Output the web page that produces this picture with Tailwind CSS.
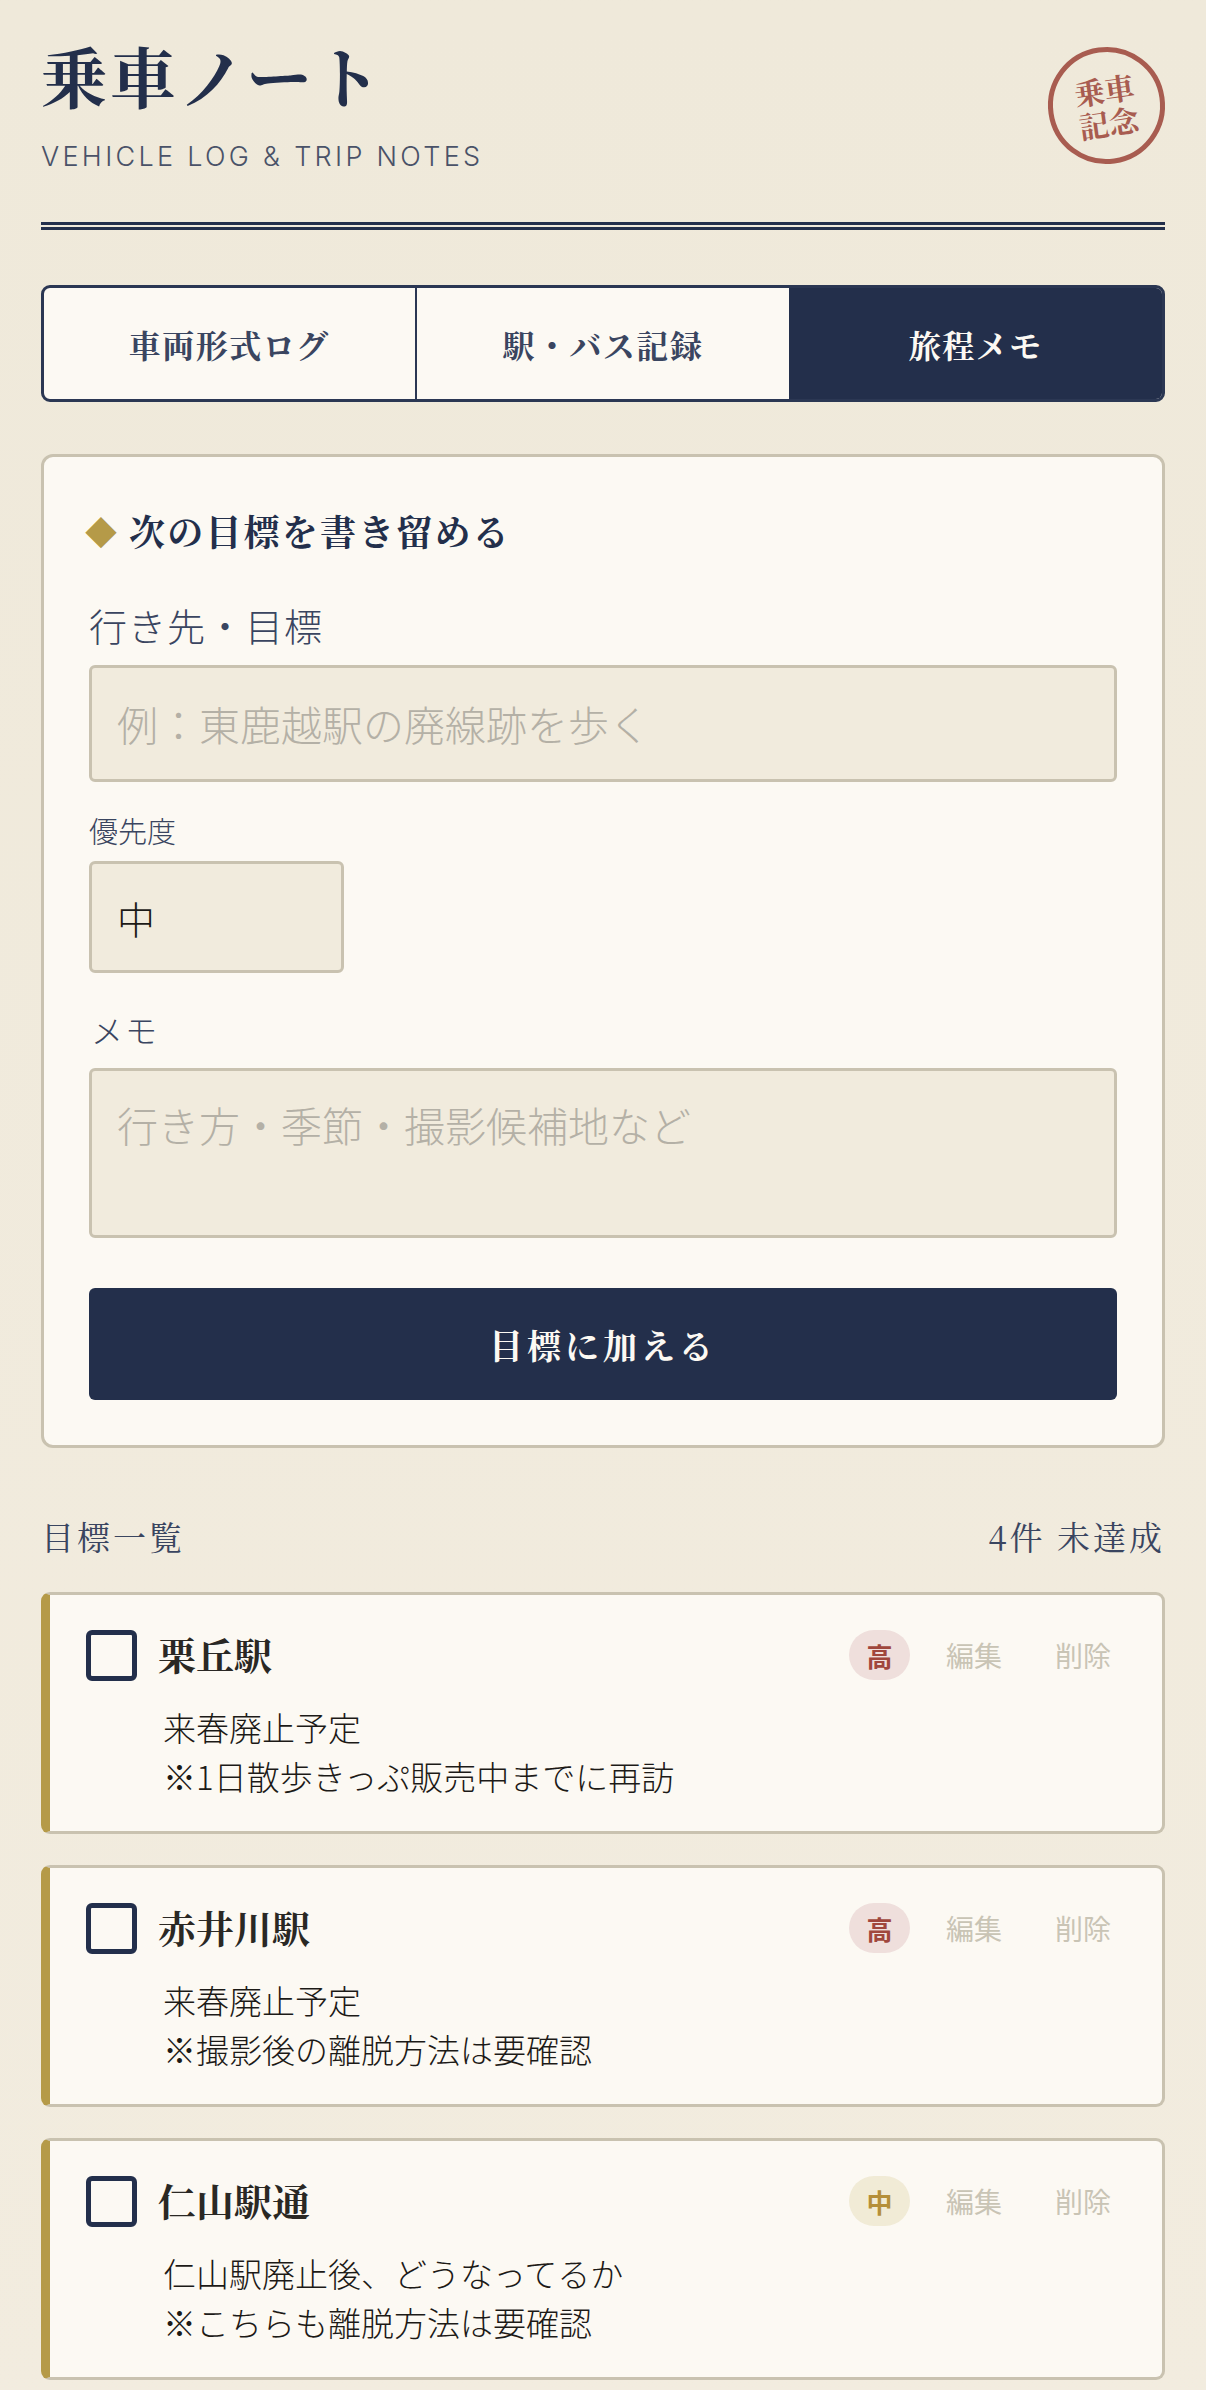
<!DOCTYPE html>
<html lang="ja">
<head>
<meta charset="utf-8">
<script src="https://cdn.jsdelivr.net/npm/@tailwindcss/browser@4"></script>
</head>
<body class="bg-[#f0e9da] bg-linear-to-b from-[#efe9da] to-[#f2ecdf] font-['Noto_Serif_CJK_JP','Noto_Sans_CJK_JP',serif]">
<main class="w-[1206px] h-[2390px] overflow-hidden px-[41px] pt-[35px]">
  <header class="h-[195px] border-b-[8px] border-double border-[#232f4b] flex justify-between">
    <div>
      <h1 class="text-[66px] leading-[80px] font-bold tracking-[3px] text-[#232f4b]">乗車ノート</h1>
      <p class="mt-[24px] text-[27px] leading-[36px] font-light tracking-[3.3px] text-[#4a5268] font-['Inter',sans-serif]">VEHICLE LOG &amp; TRIP NOTES</p>
    </div>
    <div class="mt-[12px] w-[117px] h-[117px] rounded-full border-[5px] border-[#a85c50] flex items-center justify-center text-[30px] leading-[33px] font-bold text-[#a85c50] text-center -rotate-[8deg]">乗車<br>記念</div>
  </header>

  <nav class="mt-[55px] h-[117px] grid grid-cols-3 rounded-[9px] border-[3px] border-[#2b3753] overflow-hidden bg-[#fcf9f3] text-[32px] font-bold tracking-[1.5px]">
    <div class="flex items-center justify-center border-r-[2px] border-[#2b3753] text-[#3a4560]">車両形式ログ</div>
    <div class="flex items-center justify-center text-[#3a4560]">駅・バス記録</div>
    <div class="flex items-center justify-center bg-[#232f4b] text-[#fcf9f3]">旅程メモ</div>
  </nav>

  <section class="mt-[52px] h-[994px] rounded-[12px] border-[3px] border-[#c9c2b0] bg-[#fcf9f3] px-[45px] pt-[50px]">
    <h2 class="flex items-center h-[48px] text-[36px] font-bold tracking-[2.2px] text-[#232f4b]"><span class="-ml-[4px] mr-[16px] w-[28px] text-[#b59a48] text-[32px] leading-none">◆</span>次の目標を書き留める</h2>
    <label class="block mt-[45px] font-['Noto_Sans_CJK_JP',sans-serif] font-light text-[38px] leading-[50px] tracking-[1px] text-[#3a4560]">行き先・目標</label>
    <div class="mt-[15px] h-[117px] rounded-[6px] border-[3px] border-[#c9c2b0] bg-[#f1ebdd] px-[25px] flex items-center font-['Noto_Sans_CJK_JP',sans-serif] font-light text-[41px] text-[#b4b0a6]">例：東鹿越駅の廃線跡を歩く</div>
    <label class="block mt-[18px] font-['Noto_Sans_CJK_JP',sans-serif] font-light text-[29px] leading-[61px] text-[#3a4560]">優先度</label>
    <div class="h-[112px] w-[255px] rounded-[6px] border-[3px] border-[#c9c2b0] bg-[#f1ebdd] px-[25px] flex items-center font-['Noto_Sans_CJK_JP',sans-serif] font-light text-[38px] text-[#1c1a17]">中</div>
    <label class="block mt-[36px] ml-[2px] font-['Noto_Sans_CJK_JP',sans-serif] font-light text-[32px] leading-[40px] tracking-[2px] text-[#3a4560]">メモ</label>
    <div class="mt-[19px] h-[170px] rounded-[6px] border-[3px] border-[#c9c2b0] bg-[#f1ebdd] px-[25px] pt-[28px] font-['Noto_Sans_CJK_JP',sans-serif] font-light text-[41px] leading-[50px] text-[#b4b0a6]">行き方・季節・撮影候補地など</div>
    <button class="mt-[50px] w-full h-[112px] rounded-[6px] bg-[#232f4b] text-[#fcf9f3] text-[34px] font-bold tracking-[4px]">目標に加える</button>
  </section>

  <div class="mt-[64px] flex justify-between items-center h-[48px] text-[33px] tracking-[3px] text-[#3a4560]">
    <span>目標一覧</span><span>4件 未達成</span>
  </div>

  <ul class="mt-[32px] flex flex-col gap-[31px]">
    <li class="h-[242px] rounded-[9px] border-[3px] border-l-[9px] border-[#c9c2b0] border-l-[#b59a48] bg-[#fcf9f3] pl-[36px] pr-[51px] pt-[35px]">
      <div class="flex items-start">
        <span class="w-[51px] h-[51px] rounded-[6px] border-[5px] border-[#232f4b]"></span>
        <h3 class="ml-[21px] -mt-[3px] flex-1 text-[38px] leading-[54px] font-bold text-[#2a2824]">栗丘駅</h3>
        <span class="w-[61px] h-[50px] rounded-full bg-[#efdfdc] flex items-center justify-center text-[26px] font-bold text-[#a0473d] font-['Noto_Sans_CJK_JP',sans-serif]">高</span>
        <span class="ml-[36px] h-[50px] flex items-center text-[28px] text-[#c9c4b5] font-['Noto_Sans_CJK_JP',sans-serif]">編集</span>
        <span class="ml-[53px] h-[50px] flex items-center text-[28px] text-[#c9c4b5] font-['Noto_Sans_CJK_JP',sans-serif]">削除</span>
      </div>
      <p class="ml-[77px] mt-[22px] font-['Noto_Sans_CJK_JP',sans-serif] font-light text-[33px] leading-[49px] text-[#1c1a17]">来春廃止予定<br>※1日散歩きっぷ販売中までに再訪</p>
    </li>
    <li class="h-[242px] rounded-[9px] border-[3px] border-l-[9px] border-[#c9c2b0] border-l-[#b59a48] bg-[#fcf9f3] pl-[36px] pr-[51px] pt-[35px]">
      <div class="flex items-start">
        <span class="w-[51px] h-[51px] rounded-[6px] border-[5px] border-[#232f4b]"></span>
        <h3 class="ml-[21px] -mt-[3px] flex-1 text-[38px] leading-[54px] font-bold text-[#2a2824]">赤井川駅</h3>
        <span class="w-[61px] h-[50px] rounded-full bg-[#efdfdc] flex items-center justify-center text-[26px] font-bold text-[#a0473d] font-['Noto_Sans_CJK_JP',sans-serif]">高</span>
        <span class="ml-[36px] h-[50px] flex items-center text-[28px] text-[#c9c4b5] font-['Noto_Sans_CJK_JP',sans-serif]">編集</span>
        <span class="ml-[53px] h-[50px] flex items-center text-[28px] text-[#c9c4b5] font-['Noto_Sans_CJK_JP',sans-serif]">削除</span>
      </div>
      <p class="ml-[77px] mt-[22px] font-['Noto_Sans_CJK_JP',sans-serif] font-light text-[33px] leading-[49px] text-[#1c1a17]">来春廃止予定<br>※撮影後の離脱方法は要確認</p>
    </li>
    <li class="h-[242px] rounded-[9px] border-[3px] border-l-[9px] border-[#c9c2b0] border-l-[#b59a48] bg-[#fcf9f3] pl-[36px] pr-[51px] pt-[35px]">
      <div class="flex items-start">
        <span class="w-[51px] h-[51px] rounded-[6px] border-[5px] border-[#232f4b]"></span>
        <h3 class="ml-[21px] -mt-[3px] flex-1 text-[38px] leading-[54px] font-bold text-[#2a2824]">仁山駅通</h3>
        <span class="w-[61px] h-[50px] rounded-full bg-[#f1ebd6] flex items-center justify-center text-[26px] font-bold text-[#b58f3a] font-['Noto_Sans_CJK_JP',sans-serif]">中</span>
        <span class="ml-[36px] h-[50px] flex items-center text-[28px] text-[#c9c4b5] font-['Noto_Sans_CJK_JP',sans-serif]">編集</span>
        <span class="ml-[53px] h-[50px] flex items-center text-[28px] text-[#c9c4b5] font-['Noto_Sans_CJK_JP',sans-serif]">削除</span>
      </div>
      <p class="ml-[77px] mt-[22px] font-['Noto_Sans_CJK_JP',sans-serif] font-light text-[33px] leading-[49px] text-[#1c1a17]">仁山駅廃止後、どうなってるか<br>※こちらも離脱方法は要確認</p>
    </li>
  </ul>
</main>
</body>
</html>
